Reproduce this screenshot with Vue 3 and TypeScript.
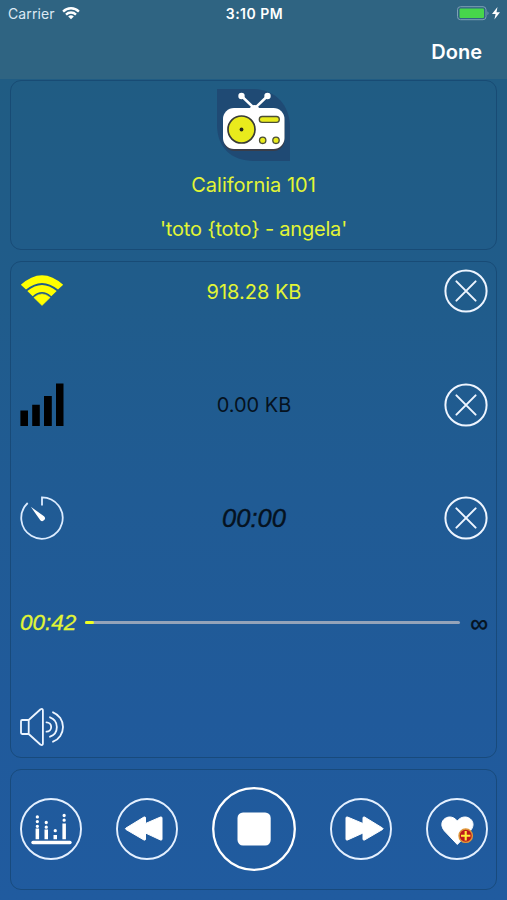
<script setup lang="ts">
interface Meter {
  id: string
  value: string
  kind: 'wifi' | 'cellular' | 'timer'
}

const meters: Meter[] = [
  { id: 'wifi', value: '918.28 KB', kind: 'wifi' },
  { id: 'cellular', value: '0.00 KB', kind: 'cellular' },
  { id: 'timer', value: '00:00', kind: 'timer' },
]

const station = 'California 101'
const track = "'toto {toto} - angela'"
const elapsed = '00:42'
const progress = 2.4
</script>

<template>
  <div class="screen">
    <header class="header">
      <div class="status">
        <div class="carrier">
          <span>Carrier</span>
          <svg width="18" height="13" viewBox="0 0 18 13" fill="none" stroke="#fff" stroke-width="2.3">
            <path d="M1.1 4.600a11 11 0 0 1 15.800 0M4 7.600a7 7 0 0 1 10 0" />
            <path d="M9 12.200L6.200 9.500a4 4 0 0 1 5.600 0Z" fill="#fff" stroke="none" />
          </svg>
        </div>
        <span class="clock">3:10 PM</span>
        <div class="power">
          <svg width="44" height="16" viewBox="0 0 44 16">
            <rect x="0.500" y="0.700" width="28.500" height="13" rx="3" fill="none" stroke="#7f9fb6" />
            <rect x="2.500" y="2.500" width="24.500" height="9.400" rx="1" fill="#47d64b" />
            <path d="M30.500 5.200q2 2 0 4Z" fill="#7f9fb6" />
            <path d="M40.500 1L35 8H38.600L37.400 13.500L43 6.300H39.500Z" fill="#fff" />
          </svg>
        </div>
      </div>
      <div class="nav"><button class="done" type="button">Done</button></div>
    </header>

    <main class="content">
      <section class="card station">
        <svg class="logo" width="74" height="73" viewBox="0 0 74 73">
          <path d="M0 0H36C58 0 73 16 73 38V72H37C14 72 0 58 0 36Z" fill="#1f4a74" />
          <path d="M24.500 7L37.500 19.500L50.500 7" fill="none" stroke="#fff" stroke-width="2.500" />
          <circle cx="24.500" cy="7" r="3.200" fill="#fff" />
          <circle cx="50.500" cy="7" r="3.200" fill="#fff" />
          <path d="M31.500 21Q37.500 11 43.500 21Z" fill="#fff" />
          <rect x="6.500" y="21" width="61" height="41" rx="11" fill="#393d49" />
          <rect x="6" y="19" width="61.500" height="41" rx="11" fill="#fff" />
          <circle cx="24.500" cy="40.500" r="13.500" fill="#e9eb1c" stroke="#383b35" stroke-width="1.700" />
          <circle cx="24.500" cy="40.500" r="1.900" fill="#24281b" />
          <rect x="42.300" y="27.500" width="20" height="5.800" rx="2.900" fill="#e9eb1c" stroke="#4b4e35" stroke-width="1.300" />
          <circle cx="45.700" cy="51.300" r="3.200" fill="#e9eb1c" stroke="#4b4e35" stroke-width="1.300" />
          <circle cx="59" cy="51.300" r="3.200" fill="#e9eb1c" stroke="#4b4e35" stroke-width="1.300" />
        </svg>
        <div class="name">{{ station }}</div>
        <div class="name track">{{ track }}</div>
      </section>

      <section class="card meters">
        <div v-for="m in meters" :key="m.id" class="meter">
          <svg v-if="m.kind === 'wifi'" width="44" height="44" viewBox="0 0 44 44">
            <path d="M.8 15.800Q22-3.500 43.200 15.800L38 20.600Q22 7.200 6 20.600Z" fill="#ff0" />
            <path d="M7.300 22Q22 9.800 36.700 22L31.300 27.200Q22 19 12.700 27.200Z" fill="#ff0" />
            <path d="M13.800 28.500Q22 21.300 30.200 28.500L22 36.500Z" fill="#ff0" stroke="#ff0" stroke-width=".5" stroke-linejoin="round" />
          </svg>
          <svg v-else-if="m.kind === 'cellular'" width="44" height="44" viewBox="0 0 44 44">
            <path d="M.4 27.500H8V43H.4ZM12.200 21.800H19.800V43H12.200ZM24 13H31.800V43H24ZM36 .600H43.500V43H36Z" fill="#000" />
          </svg>
          <svg v-else width="44" height="44" viewBox="0 0 44 44">
            <path d="M7.700 7A20.700 20.700 0 1 0 22 1.300V9.500" fill="none" stroke="#dcecff" stroke-width="1.800" />
            <path d="M10.800 10.800L24 20.200A2.700 2.700 0 0 1 20.300 24.300Z" fill="#fff" />
          </svg>
          <span class="value" :class="m.kind">{{ m.value }}</span>
          <svg width="44" height="44" viewBox="0 0 44 44" fill="none" stroke="#eef5ff" stroke-width="2">
            <circle cx="22" cy="22" r="20.600" />
            <path d="M12.400 12.400L31.600 31.600M31.600 12.400L12.400 31.600" stroke-linecap="round" />
          </svg>
        </div>

        <div class="slider">
          <span class="elapsed">{{ elapsed }}</span>
          <div class="bar"><div class="fill" :style="{ width: progress + '%' }"></div></div>
          <span class="infinity">∞</span>
        </div>

        <svg width="44" height="44" viewBox="0 0 44 44" fill="none" stroke="#edf5ff" stroke-width="1.800" stroke-linejoin="round" stroke-linecap="round">
          <path d="M8.700 15V29M8.700 15H2.200Q1 15 1 16.200V27.800Q1 29 2.200 29H8.700L20.300 39.500Q22.900 41 22.900 38.500V5.500Q22.900 3 20.300 4.500L8.700 15" />
          <path d="M26.500 17.300A4.700 4.700 0 0 1 26.500 26.700M30 12.300A10.300 10.300 0 0 1 30 31.700M33 7.300A15.800 15.800 0 0 1 33 36.700" />
        </svg>
      </section>

      <section class="card controls">
        <button type="button" class="round" aria-label="Equalizer">
          <svg width="62" height="62" viewBox="0 0 62 62" fill="#fff">
            <circle cx="31" cy="31" r="30" class="ring" />
            <rect x="11.300" y="42.700" width="40.400" height="3.500" rx="1.700" />
            <path d="M15.600 30.500H19.100V41.300H15.600ZM24.500 31.500H28V41.300H24.500ZM33.500 37H37V41.300H33.500ZM42.400 25.500H45.900V41.300H42.400Z" />
            <path d="M17.350 18.900V29M26.250 24.500V30M35.250 32.700V33.500M44.150 17.500V24" stroke="#fff" stroke-width="3.300" stroke-linecap="round" stroke-dasharray="0.010 4.700" />
          </svg>
        </button>
        <button type="button" class="round" aria-label="Previous">
          <svg width="62" height="62" viewBox="0 0 62 62" fill="#fff">
            <circle cx="31" cy="31" r="30" class="ring" />
            <path d="M10 30L28 19Q29.500 18.500 29.500 20V25.500L44.500 19Q46 18.500 46 20V41Q46 42.500 44.500 42L29.500 35V41Q29.500 42.500 28 42L10 31.500Q8.800 30.700 10 30Z" stroke="#fff" stroke-width="1" stroke-linejoin="round" />
          </svg>
        </button>
        <button type="button" class="round" aria-label="Stop">
          <svg width="84" height="84" viewBox="0 0 84 84" fill="#fff">
            <circle cx="42" cy="42" r="40.800" class="ring big" />
            <rect x="25.500" y="25.400" width="33.200" height="33.200" rx="5.500" />
          </svg>
        </button>
        <button type="button" class="round" aria-label="Next">
          <svg width="62" height="62" viewBox="0 0 62 62" fill="#fff">
            <circle cx="31" cy="31" r="30" class="ring" />
            <path d="M52.500 30L34.500 19Q33 18.500 33 20V25.500L17.500 19Q16 18.500 16 20V41Q16 42.500 17.500 42L33 35V41Q33 42.500 34.500 42L52.500 31.500Q53.700 30.700 52.500 30Z" stroke="#fff" stroke-width="1" stroke-linejoin="round" />
          </svg>
        </button>
        <button type="button" class="round" aria-label="Add to favorites">
          <svg width="62" height="62" viewBox="0 0 62 62" fill="#fff">
            <circle cx="31" cy="31" r="30" class="ring" />
            <path d="M31.300 46.500L18.500 33C10 22.500 24 13.500 31.300 23C38.600 13.500 53 22.500 44.300 33Z" stroke="#fff" stroke-width="1" stroke-linejoin="round" />
            <circle cx="39.700" cy="37.700" r="6.700" fill="#bd1a1c" stroke="#df9638" stroke-width="1.400" />
            <path d="M35 37.700H44.400M39.700 33V42.400" stroke="#ffed38" stroke-width="2.100" />
          </svg>
        </button>
      </section>
    </main>
  </div>
</template>

<style>
body {
  margin: 0;
}
</style>

<style scoped>
.screen {
  width: 507px;
  height: 900px;
  display: flex;
  flex-direction: column;
  overflow: hidden;
  background: linear-gradient(#205b7b 0, #205c83 80px, #205c8b 300px, #205b94 500px, #205a9b 720px, #205b9f 900px);
  font-family: Inter, "Liberation Sans", sans-serif;
  color: #fff;
}
.header {
  height: 79px;
  flex: none;
  background: #2f6482;
}
.status {
  height: 27px;
  display: grid;
  grid-template-columns: 1fr auto 1fr;
  align-items: center;
  padding: 0 6px 0 8px;
  font-size: 14px;
}
.carrier {
  display: flex;
  align-items: center;
  gap: 7px;
  color: #dce9f4;
  letter-spacing: 0.1px;
}
.clock {
  font-weight: 600;
  font-size: 14px;
  letter-spacing: 0.5px;
}
.power {
  display: flex;
  justify-content: flex-end;
}
.nav {
  height: 50px;
  display: flex;
  align-items: center;
  justify-content: flex-end;
  padding-right: 25px;
}
button {
  border: 0;
  padding: 0;
  background: none;
  color: inherit;
  font: inherit;
}
.done {
  font-size: 20px;
  font-weight: 600;
}
.content {
  padding: 1px 10px 0;
  display: flex;
  flex-direction: column;
  gap: 11px;
}
.card {
  box-sizing: border-box;
  border: 1px solid rgba(20, 66, 108, 0.65);
  border-radius: 11px;
}
.station {
  height: 170px;
  display: flex;
  flex-direction: column;
  align-items: center;
  padding-top: 8px;
}
.logo {
  flex: none;
}
.name {
  margin-top: 10px;
  height: 26px;
  line-height: 26px;
  font-size: 20px;
  color: #e2f535;
}
.track {
  margin-top: 18px;
  letter-spacing: -0.2px;
}
.meters {
  height: 497px;
  padding: 7px 8px 0 9px;
  display: flex;
  flex-direction: column;
  gap: 69.5px;
}
.meter {
  height: 44px;
  display: flex;
  align-items: center;
  justify-content: space-between;
}
.value {
  font-size: 20px;
  color: #051220;
}
.value.wifi {
  color: #e2f535;
  padding-top: 1px;
}
.value.timer {
  font-family: "Liberation Sans", sans-serif;
  font-style: italic;
  font-size: 25.5px;
  -webkit-text-stroke: 0.4px currentColor;
}
.slider {
  height: 26px;
  display: flex;
  align-items: center;
}
.elapsed {
  width: 65px;
  padding-top: 1px;
  box-sizing: border-box;
  font-family: "Liberation Sans", sans-serif;
  font-style: italic;
  font-size: 22.5px;
  -webkit-text-stroke: 0.3px currentColor;
  color: #e2f535;
}
.bar {
  flex: 1;
  height: 3px;
  border-radius: 2px;
  background: #94a3b9;
}
.fill {
  height: 3px;
  border-radius: 2px;
  background: #efff20;
}
.infinity {
  width: 28px;
  text-align: right;
  color: #051220;
  font-family: "Liberation Sans", sans-serif;
  font-size: 25px;
  line-height: 26px;
  -webkit-text-stroke: 0.4px currentColor;
}
.controls {
  height: 121px;
  padding: 0 8px 2px 9px;
  display: flex;
  align-items: center;
  justify-content: space-between;
}
.round {
  display: flex;
}
.ring {
  fill: none;
  stroke: #e4f0ff;
  stroke-width: 1.9px;
}
.big {
  stroke: #fff;
  stroke-width: 2.3px;
}
</style>
